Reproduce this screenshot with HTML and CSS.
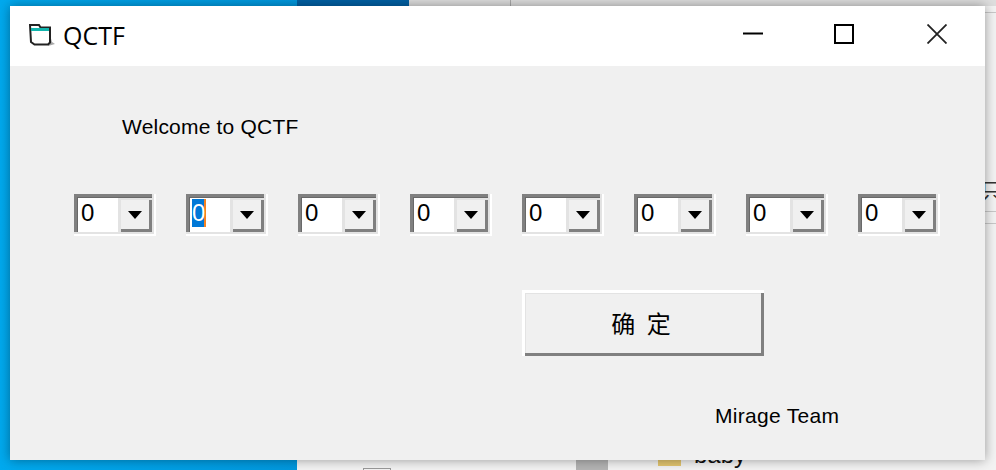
FILE: index.html
```html
<!DOCTYPE html>
<html lang="en">
    <head>
        <meta charset="UTF-8">
        <meta name="viewport" content="width=device-width, initial-scale=1.0">
        <title>QCTF</title>
        <link rel="stylesheet" href="styles.css">
    </head>
    <body>
        <div class="desktop">
            <div class="wallpaper"></div>
            <div class="behind">
                <div class="behind-tab"></div>
                <div class="behind-rule"></div>
                <span class="peek-glyph">只</span>
                <div class="peek-line peek-line-top"></div>
                <div class="peek-line peek-line-a"></div>
                <div class="peek-line peek-line-b"></div>
                <div class="peek-check"></div>
                <div class="peek-thumb"></div>
                <div class="peek-folder"></div>
                <span class="peek-name">baby</span>
            </div>

            <div class="window">
                <div class="titlebar">
                    <svg class="app-icon" viewBox="0 0 26 24" width="26" height="24">
                        <path d="M21 11l2 7 3 2-7 2z" fill="#a8a8a8"/>
                        <path d="M1 1h9l1.500 2.500H21v15l-2 2H5.500L2 18z" fill="#fff" stroke="#222" stroke-width="2"/>
                        <path d="M2 4h18v3H2z" fill="#12b5ad"/>
                    </svg>
                    <div class="title">QCTF</div>
                    <div class="controls">
                        <svg class="control" viewBox="0 0 20 20" width="20" height="20"><path d="M0 9.500h20" stroke="#000" stroke-width="2" fill="none"/></svg>
                        <svg class="control control-max" viewBox="0 0 20 20" width="20" height="20"><path d="M1 1h18v18H1z" stroke="#000" stroke-width="2" fill="none"/></svg>
                        <svg class="control" viewBox="0 0 20 20" width="20" height="20"><path d="M0.500 0.500l19 19M19.500 0.500l-19 19" stroke="#222" stroke-width="1.800" fill="none"/></svg>
                    </div>
                </div>
                <div class="client">
                    <div class="welcome">Welcome to QCTF</div>
                    <div class="combos">
                        <div class="combo"><div class="field"><span>0</span></div><div class="drop"><i></i></div></div>
                        <div class="combo"><div class="field"><span class="selected">0</span></div><div class="drop"><i></i></div></div>
                        <div class="combo"><div class="field"><span>0</span></div><div class="drop"><i></i></div></div>
                        <div class="combo"><div class="field"><span>0</span></div><div class="drop"><i></i></div></div>
                        <div class="combo"><div class="field"><span>0</span></div><div class="drop"><i></i></div></div>
                        <div class="combo"><div class="field"><span>0</span></div><div class="drop"><i></i></div></div>
                        <div class="combo"><div class="field"><span>0</span></div><div class="drop"><i></i></div></div>
                        <div class="combo"><div class="field"><span>0</span></div><div class="drop"><i></i></div></div>
                    </div>
                    <button class="ok">确 定</button>
                    <div class="team">Mirage Team</div>
                </div>
            </div>
        </div>
    </body>
</html>
```

FILE: styles.css
```css
html, body {
    margin: 0;
    padding: 0;
}
body {
    font-family: 'Liberation Sans', 'Noto Sans CJK SC', sans-serif;
    overflow: hidden;
}
.desktop {
    position: relative;
    display: flex;
    width: 996px;
    height: 470px;
    overflow: hidden;
}
.wallpaper {
    width: 297px;
    background: linear-gradient(90deg, #00a9ee, #0098de);
}
.behind {
    position: relative;
    flex: 1;
    background: linear-gradient(#dedede 6px, #f3f3f3 6px);
}
.behind-tab {
    width: 112px;
    height: 6px;
    background-color: #0060a4;
}
.behind-rule {
    position: absolute;
    left: 213px;
    top: 0;
    width: 1px;
    height: 6px;
    background-color: #aaa;
}
.peek-glyph {
    position: absolute;
    left: 683px;
    top: 176px;
    font-size: 22px;
    line-height: 26px;
    color: #333;
    font-family: 'Noto Sans CJK SC', sans-serif;
}
.peek-line {
    position: absolute;
    left: 680px;
    width: 19px;
    height: 1px;
    background-color: #c8c8c8;
}
.peek-line-top {
    top: 12px;
}
.peek-line-a {
    top: 211px;
}
.peek-line-b {
    top: 223px;
}
.peek-check {
    position: absolute;
    left: 66px;
    top: 468px;
    width: 26px;
    height: 4px;
    border: 1px solid #999;
}
.peek-thumb {
    position: absolute;
    left: 279px;
    top: 460px;
    width: 32px;
    height: 10px;
    background-color: #b4b4b4;
}
.peek-folder {
    position: absolute;
    left: 361px;
    top: 460px;
    width: 23px;
    height: 6px;
    background-color: #e3c66f;
}
.peek-name {
    position: absolute;
    left: 397px;
    top: 441px;
    font-size: 24px;
    line-height: 28px;
    color: #111;
}

.window {
    position: absolute;
    left: 10px;
    top: 6px;
    width: 975px;
    height: 454px;
    display: flex;
    flex-direction: column;
    box-shadow: 0 0 11px rgba(0, 0, 0, 0.38);
}
.titlebar {
    display: flex;
    align-items: center;
    height: 60px;
    background-color: #fff;
}
.app-icon {
    margin-left: 19px;
    margin-bottom: 1px;
}
.title {
    margin-left: 8px;
    margin-bottom: 3px;
    font-family: 'Open Sans', sans-serif;
    font-size: 25px;
    color: #000;
}
.controls {
    display: flex;
    margin-left: auto;
    margin-right: 38px;
    margin-bottom: 4px;
}
.control-max {
    margin: 0 73px 0 71px;
}
.client {
    flex: 1;
    display: flex;
    flex-direction: column;
    background-color: #f0f0f0;
    color: #000;
}
.welcome {
    margin: 49px 0 0 112px;
    font-size: 21px;
    line-height: 24px;
    letter-spacing: 0.2px;
}
.combos {
    display: flex;
    gap: 30px;
    margin: 55px 0 0 64px;
}
.combo {
    display: flex;
    box-sizing: border-box;
    width: 82px;
    height: 42px;
    padding: 4px;
    background-color: #fff;
    box-shadow: inset -2px -2px 0 #fff, inset -4px -4px 0 #e3e3e3, inset 3px 3px 0 #808080, inset 4px 4px 0 #696969;
}
.field {
    flex: 1;
    font-size: 24px;
    line-height: 30px;
    padding-left: 3px;
}
.selected {
    display: inline-block;
    width: 12px;
    height: 28px;
    line-height: 28px;
    margin-left: -1px;
    background-color: #0078d7;
    color: #fff;
    text-align: center;
    border-right: 2px solid #f58220;
}
.drop {
    display: flex;
    align-items: center;
    justify-content: center;
    box-sizing: border-box;
    width: 34px;
    height: 34px;
    background-color: #f0f0f0;
    box-shadow: inset 3px 2px 0 #e3e3e3, inset -3px -3px 0 #808080;
}
.drop i {
    display: block;
    width: 0;
    height: 0;
    border-left: 7px solid transparent;
    border-right: 7px solid transparent;
    border-top: 8px solid #000;
}
.ok {
    box-sizing: border-box;
    width: 242px;
    height: 66px;
    margin: 54px 0 0 512px;
    padding: 0 4px 2px 0;
    border: 0;
    background-color: #f0f0f0;
    box-shadow: inset 3px 3px 0 #fff, inset -3px -3px 0 #808080, inset 4px 4px 0 #e3e3e3;
    font-family: 'Noto Sans CJK SC', sans-serif;
    font-size: 24px;
    word-spacing: 6px;
    color: #000;
}
.team {
    margin: 48px 0 0 705px;
    font-size: 21px;
    line-height: 24px;
    letter-spacing: 0.3px;
}
```
